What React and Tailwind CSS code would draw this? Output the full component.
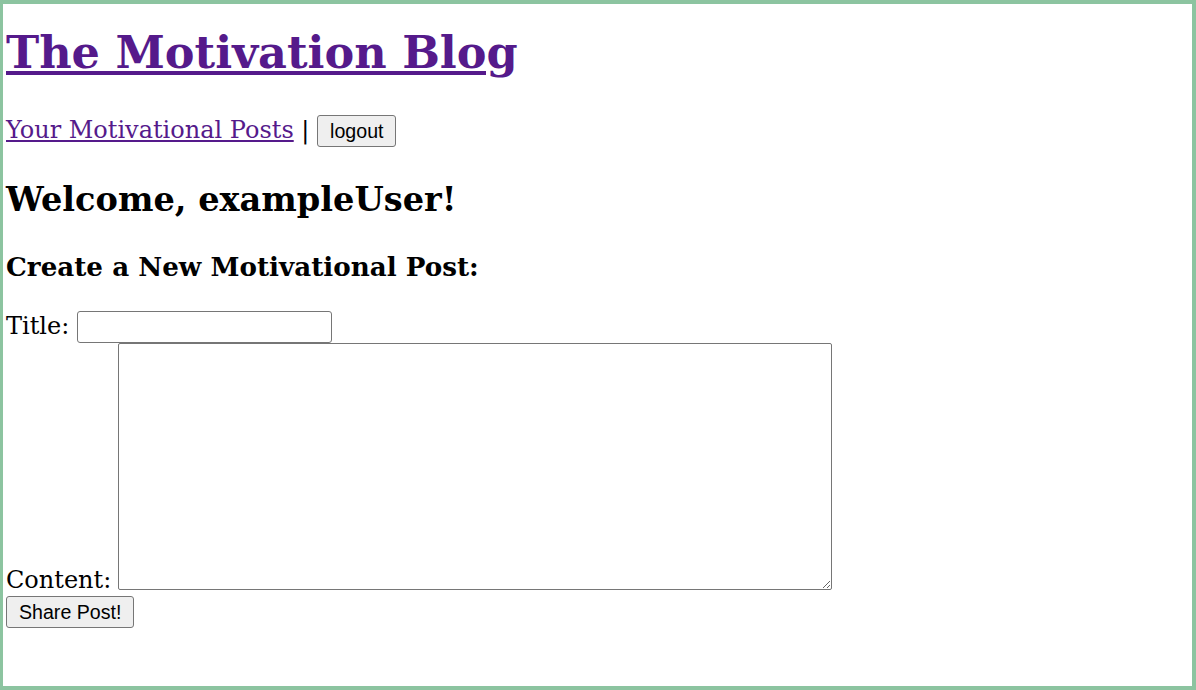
export default function App() {
  const serif = { fontFamily: '"DejaVu Serif", "Liberation Serif", serif' };
  const btn =
    "bg-[#efefef] border border-[#767676] rounded-[3px] px-[12px] py-[4px] text-[19.6px] leading-[22px] text-black font-['Liberation_Sans',Arial,sans-serif]";
  return (
    <div
      style={serif}
      className="h-[690px] w-[1196px] border-t-4 border-b-4 border-r-4 border-l-[3px] border-[#8cc4a0] bg-white pl-[3px] text-black"
    >
      <h1 className="mt-[23px] text-[44.6px] font-bold leading-[52px]">
        <a href="#" className="text-[#551a8b] underline">
          The Motivation Blog
        </a>
      </h1>
      <div className="mt-[35px] text-[24px] leading-[32px]">
        <a href="#" className="text-[#551a8b] underline">
          Your Motivational Posts
        </a>{" "}
        |{" "}
        <button className={btn}>logout</button>
      </div>
      <h2 className="mt-[32px] text-[33.6px] font-bold leading-[40px]">Welcome, exampleUser!</h2>
      <h3 className="mt-[32px] text-[26.2px] font-bold leading-[32px]">Create a New Motivational Post:</h3>
      <form className="mt-[28px] text-[24px]" onSubmit={(e) => e.preventDefault()}>
        <div className="flex items-end gap-[8px]">
          <label className="mb-[7px] leading-[20px]">Title:</label>
          <input
            type="text"
            className="h-[32px] w-[255px] rounded-[3px] border border-[#767676] bg-white px-1 text-[16px]"
          />
        </div>
        <div className="flex items-end gap-[7px]">
          <label className="mb-[0px] leading-[20px]">Content:</label>
          <textarea className="h-[247px] w-[714px] rounded-[2px] border border-[#767676] bg-white p-1 text-[16px]" />
        </div>
        <button type="submit" className={"mt-[6px] " + btn}>
          Share Post!
        </button>
      </form>
    </div>
  );
}
